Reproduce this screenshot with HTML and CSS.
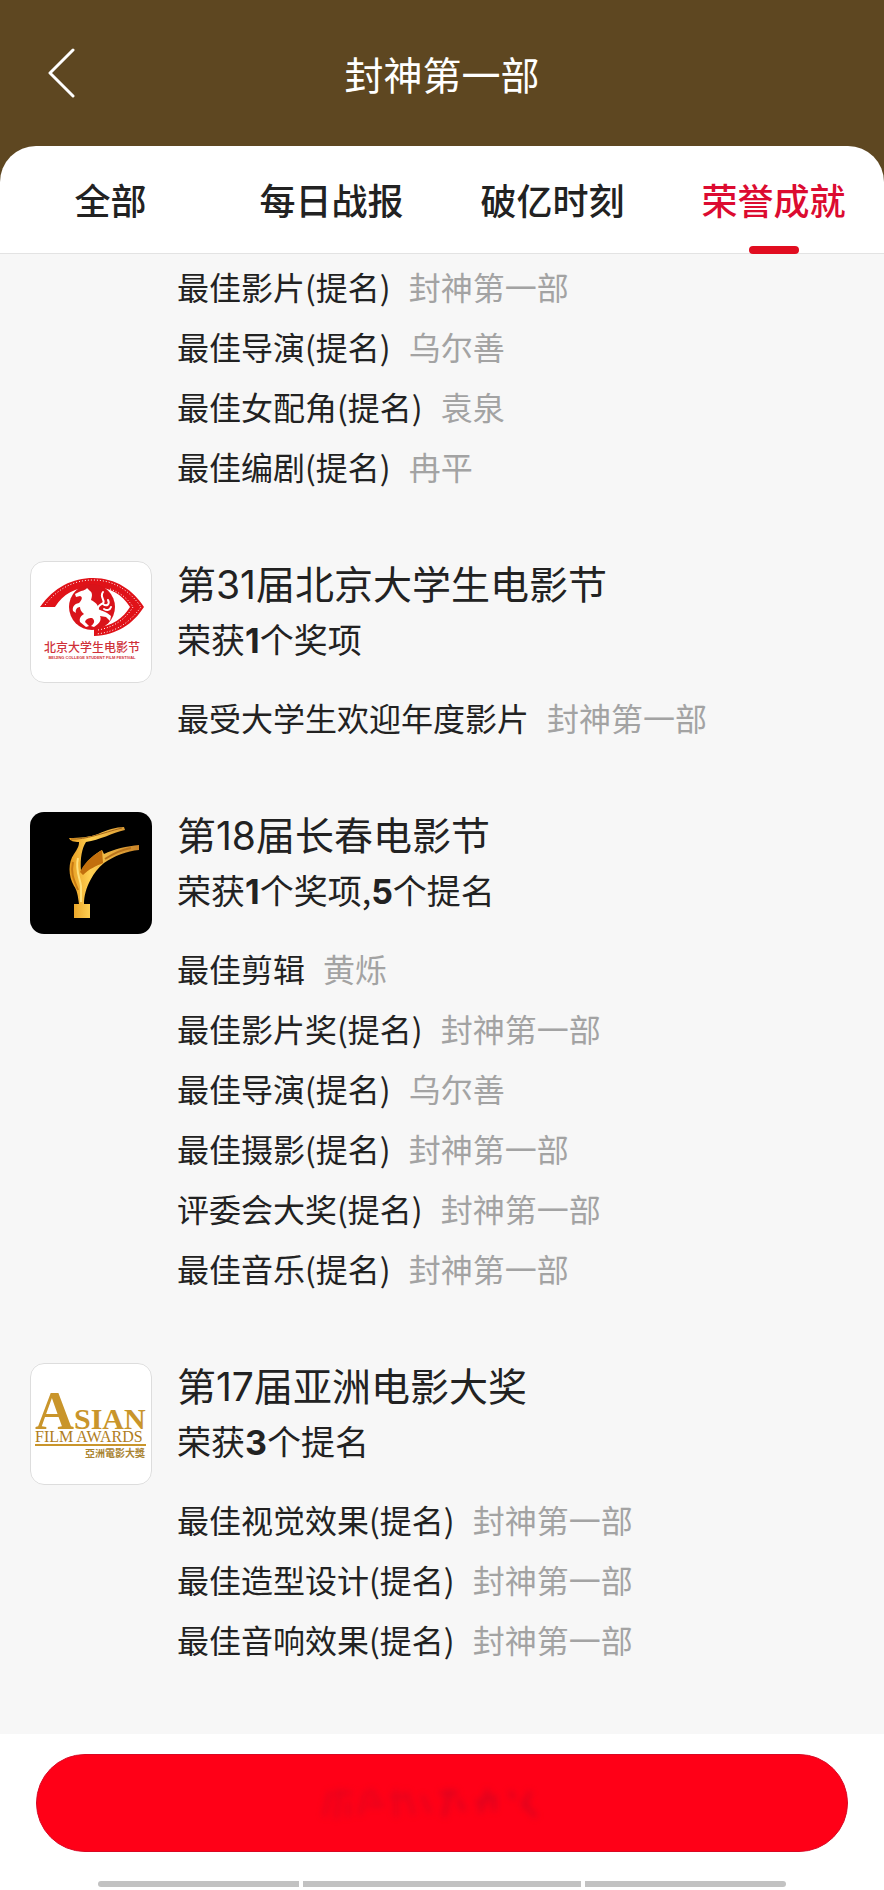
FILE: index.html
```
<!DOCTYPE html>
<html lang="zh-CN">
<head>
    <meta charset="UTF-8">
    <meta name="viewport" content="width=device-width, initial-scale=1">
    <title>封神第一部</title>
    <link rel="stylesheet" href="styles.css">
</head>
<body>
<header class="header">
    <button class="back-btn" aria-label="返回">
        <svg width="30" height="50" viewBox="0 0 30 50" fill="none" stroke="#fff" stroke-width="3" stroke-linecap="round" stroke-linejoin="round">
            <path d="M27 2 4 25 27 48"/>
        </svg>
    </button>
    <h1>封神第一部</h1>
</header>

<nav class="tabs">
    <a href="#all">全部</a>
    <a href="#daily">每日战报</a>
    <a href="#moments">破亿时刻</a>
    <a href="#honors" class="active" aria-current="page">荣誉成就</a>
</nav>

<main class="content">
    <section class="award">
        <ul class="award-list">
            <li>最佳影片(提名)<span>封神第一部</span></li>
            <li>最佳导演(提名)<span>乌尔善</span></li>
            <li>最佳女配角(提名)<span>袁泉</span></li>
            <li>最佳编剧(提名)<span>冉平</span></li>
        </ul>
    </section>

    <section class="award">
        <svg class="logo" viewBox="0 0 122 122" role="img" aria-label="北京大学生电影节">
            <path d="M10 46C24 26 43 17 63 17C86 17 103 29 114 46C103 63 87 74 64 75V67C83 65 93 57 100 46C92 33 80 26 63 26C45 26 33 33 25 46Z" fill="#e01218"/>
            <path d="M15 44C28 27 45 19 63 19C84 19 100 30 111 46C100 61 87 71 66 73" fill="none" stroke="#fff" stroke-width="1" stroke-dasharray="1 2"/>
            <path d="M80 28C91 32 98 38 103 46C97 56 86 66 68 69" fill="none" stroke="#fff" stroke-width="1" stroke-dasharray="1 2"/>
            <circle cx="62" cy="46" r="23" fill="#d9131a"/>
            <path d="M49 31C52 29 55 30 57 27L60 30C63 32 62 36 61 39C65 41 69 44 68 48C72 50 77 51 81 55L80 60L76 56L70 55C72 59 69 63 64 66L61 65C65 62 65 59 62 57C58 57 56 58 55 61L59 65L56 66L50 61C49 57 51 55 54 53C51 51 50 48 50 46C47 46 45 49 46 52L43 50C42 46 44 43 49 42C52 39 53 36 50 35L46 36L45 33Z" fill="#fff"/>
            <path d="M68 48C67 45 70 44 73 42C76 40 69 36 73 31M73 43C77 46 80 43 78 39M74 48C77 50 80 49 81 46" fill="none" stroke="#fff" stroke-width="2" stroke-linecap="round"/>
            <text class="bj-name" x="62" y="91">北京大学生电影节</text>
            <text class="bj-sub" x="62" y="98">BEIJING COLLEGE STUDENT FILM FESTIVAL</text>
        </svg>
        <h2>第31届北京大学生电影节</h2>
        <p>荣获<b>1</b>个奖项</p>
        <ul class="award-list">
            <li>最受大学生欢迎年度影片<span>封神第一部</span></li>
        </ul>
    </section>

    <section class="award">
        <svg class="logo logo-dark" viewBox="0 0 122 122" role="img" aria-label="长春电影节">
            <defs>
                <linearGradient id="gold" x1="0" y1="0" x2="1" y2="0">
                    <stop offset="0" stop-color="#e59a1f"/>
                    <stop offset=".3" stop-color="#ffd052"/>
                    <stop offset="1" stop-color="#c98328"/>
                </linearGradient>
            </defs>
            <path d="M39 26C50 26 60 25 68 22C77 18 86 15 94 15L95 18C82 21 70 28 56 30C52 36 50 46 51 59C57 48 65 42 72 38L74 42C84 37 97 34 109 33V38C97 39 84 44 74 51C68 56 64 61 61 67C56 76 54 84 54 92H60V106H44V92H49C48 84 47 78 44 74C38 64 38 50 44 42C48 36 49 34 49 30C44 30 40 29 39 26Z" fill="url(#gold)"/>
            <path d="M50 60C56 48 64 43 72 38L73 51C66 54 59 57 53 63Z" fill="#c26f0d"/>
            <path d="M75 47C86 40 95 37 101 36" fill="none" stroke="#b8731c" stroke-width="2"/>
            <path d="M43 50C40 62 45 70 48 78" fill="none" stroke="#c87a12" stroke-width="2"/>
            <path d="M48 46C45 58 50 66 51 74V90" fill="none" stroke="#ffe07a" stroke-width="2"/>
            <path d="M41 27C56 28 72 21 92 16" fill="none" stroke="#a5651b" stroke-width="1"/>
        </svg>
        <h2>第18届长春电影节</h2>
        <p>荣获<b>1</b>个奖项,<b>5</b>个提名</p>
        <ul class="award-list">
            <li>最佳剪辑<span>黄烁</span></li>
            <li>最佳影片奖(提名)<span>封神第一部</span></li>
            <li>最佳导演(提名)<span>乌尔善</span></li>
            <li>最佳摄影(提名)<span>封神第一部</span></li>
            <li>评委会大奖(提名)<span>封神第一部</span></li>
            <li>最佳音乐(提名)<span>封神第一部</span></li>
        </ul>
    </section>

    <section class="award">
        <svg class="logo" viewBox="0 0 122 122" role="img" aria-label="Asian Film Awards">
            <text class="afa-big" x="5" y="66">A<tspan class="afa-mid">SIAN</tspan></text>
            <text class="afa-line" x="5" y="79">FILM AWARDS</text>
            <path d="M5 82H116" stroke="#c9952b" stroke-width="2"/>
            <text class="afa-cn" x="115" y="94">亞洲電影大獎</text>
        </svg>
        <h2>第17届亚洲电影大奖</h2>
        <p>荣获<b>3</b>个提名</p>
        <ul class="award-list">
            <li>最佳视觉效果(提名)<span>封神第一部</span></li>
            <li>最佳造型设计(提名)<span>封神第一部</span></li>
            <li>最佳音响效果(提名)<span>封神第一部</span></li>
        </ul>
    </section>
</main>

<footer class="footer">
    <button class="main-btn" aria-label="查看">
        <svg width="240" height="44" viewBox="0 0 240 44" fill="none" stroke="#a80a2c" stroke-width="5">
            <path opacity=".25" d="M8 10 2 36M12 12H30M18 8 14 38M26 20V36M44 10 38 34M48 8 56 20M46 24H62M74 8V36M68 16H88M84 10 92 34M100 14 108 32"/>
            <path opacity=".35" d="M118 12H136M128 8 122 36M136 18 142 30M154 22 170 16M166 8 158 32M172 14V30M188 10 192 18M208 10 202 28M200 20 214 36"/>
        </svg>
    </button>
    <div class="nav-bar"><i></i><i></i><i></i></div>
</footer>
</body>
</html>
```
FILE: styles.css
```
* {
    box-sizing: border-box;
}

body {
    margin: 0;
    font-family: "Noto Sans CJK SC", sans-serif;
    font-size: 32px;
    background-color: #5e4721;
    color: #222;
}

h1, h2, p, ul {
    margin: 0;
    padding: 0;
    font-weight: normal;
}

.header {
    display: grid;
    grid-template-columns: 1fr auto 1fr;
    align-items: center;
    height: 146px;
    padding: 0 46px;
    color: #fff;
}

.header h1 {
    font-size: 39px;
}

.back-btn {
    display: flex;
    justify-self: start;
    padding: 0;
    border: none;
    background: none;
    cursor: pointer;
}

.tabs {
    display: grid;
    grid-template-columns: repeat(4, 1fr);
    height: 108px;
    border-bottom: 1px solid #e3e3e3;
    border-radius: 36px 36px 0 0;
    background-color: #fff;
}

.tabs a {
    position: relative;
    font-size: 36px;
    font-weight: 500;
    line-height: 107px;
    text-align: center;
    text-decoration: none;
    color: #222;
}

.tabs .active {
    color: #dc0b30;
}

.tabs .active::after {
    content: "";
    position: absolute;
    left: 50%;
    bottom: -1px;
    width: 50px;
    height: 8px;
    margin-left: -25px;
    border-radius: 4px;
    background-color: #e10d20;
}

.content {
    padding: 2px 30px 0;
    background-color: #f7f7f7;
}

.award {
    display: grid;
    grid-template-columns: 122px 1fr;
    grid-template-rows: auto auto auto;
    column-gap: 25px;
    padding-bottom: 65px;
}

.award h2,
.award p,
.award-list {
    grid-column: 2;
}

.award h2 {
    font-family: Inter, "Noto Sans CJK SC", sans-serif;
    font-size: 39px;
    line-height: 48px;
}

.award p {
    margin-top: 6px;
    font-size: 34px;
    line-height: 48px;
}

.award b {
    font-family: Inter, sans-serif;
    font-weight: 700;
    line-height: 1;
}

.logo {
    grid-row: 1 / 4;
    width: 122px;
    height: 122px;
    border-radius: 14px;
    background-color: #fff;
    outline: 1px solid #ddd;
    outline-offset: -1px;
}

.logo-dark {
    background-color: #000;
    outline: none;
}

.award-list {
    list-style: none;
}

p + .award-list {
    margin-top: 24px;
}

.award-list li {
    line-height: 60px;
}

.award-list span {
    margin-left: 18px;
    color: #a3a3a3;
}

.bj-name {
    font-size: 12px;
    font-weight: 500;
    text-anchor: middle;
    fill: #cf3038;
}

.bj-sub {
    font-family: "Liberation Sans", sans-serif;
    font-size: 4px;
    font-weight: bold;
    text-anchor: middle;
    fill: #cf3038;
}

.afa-big {
    font-family: "Liberation Serif", serif;
    font-size: 54px;
    font-weight: bold;
    fill: #c9952b;
}

.afa-mid {
    font-size: 30px;
}

.afa-line {
    font-family: "Liberation Serif", serif;
    font-size: 16px;
    fill: #b07d1c;
    stroke: #b07d1c;
    stroke-width: 0;
}

.afa-cn {
    font-family: "Noto Sans CJK TC", sans-serif;
    font-size: 10px;
    font-weight: bold;
    text-anchor: end;
    fill: #a98432;
}

.footer {
    padding: 20px 36px 3px;
    background-color: #fff;
}

.main-btn {
    display: flex;
    align-items: center;
    justify-content: center;
    width: 100%;
    height: 98px;
    padding: 0;
    border: 1px solid #d90824;
    border-radius: 49px;
    background-color: #ff0017;
    cursor: pointer;
}

.main-btn svg {
    filter: blur(3px);
}

.nav-bar {
    display: grid;
    grid-template-columns: 201fr 278fr 201fr;
    gap: 4px;
    margin: 29px 62px 0;
}

.nav-bar i {
    height: 6px;
    background-color: #c2c2c2;
}

.nav-bar i:first-child {
    border-radius: 3px 0 0 3px;
}

.nav-bar i:last-child {
    border-radius: 0 3px 3px 0;
}
```
